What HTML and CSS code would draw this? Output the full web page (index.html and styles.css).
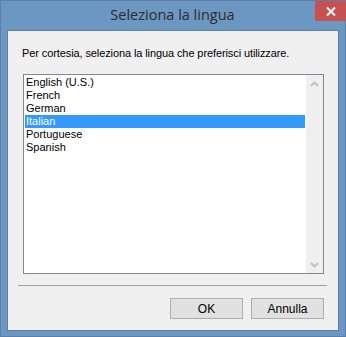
FILE: index.html
```html
<!DOCTYPE html>
<html>
<head>
   <meta charset="utf-8">
   <meta name="viewport" content="width=device-width, initial-scale=1">
   <title>Seleziona la lingua</title>
   <link rel="stylesheet" href="styles.css">
</head>
<body>
   <div class="window">
      <div class="titlebar">
         <div class="title">Seleziona la lingua</div>
         <div class="close">
            <svg width="10" height="9" viewBox="0 0 10 9">
               <path d="M1 0.5 L9 8.5 M9 0.5 L1 8.5" stroke="#fff" stroke-width="2"/>
            </svg>
         </div>
      </div>
      <div class="client">
         <p class="prompt">Per cortesia, seleziona la lingua che preferisci utilizzare.</p>
         <div class="listbox">
            <ul class="items">
               <li>English (U.S.)</li>
               <li>French</li>
               <li>German</li>
               <li class="selected">Italian</li>
               <li>Portuguese</li>
               <li>Spanish</li>
            </ul>
            <div class="scroll">
               <svg width="17" height="10" viewBox="0 0 17 10"><path d="M5 7 L8.5 3.5 L12 7" stroke="#c2c2c2" stroke-width="2" fill="none"/></svg>
               <svg width="17" height="10" viewBox="0 0 17 10"><path d="M5 3 L8.5 6.5 L12 3" stroke="#c2c2c2" stroke-width="2" fill="none"/></svg>
            </div>
         </div>
         <div class="line"></div>
         <div class="buttons">
            <button type="button" class="btn">OK</button>
            <button type="button" class="btn">Annulla</button>
         </div>
      </div>
   </div>
</body>
</html>
```
FILE: styles.css
```css
body{
   margin: 0;
   background: #6b97c2;
}

.window{
   width: 346px;
   height: 337px;
   box-sizing: border-box;
   border: 1px solid #5a80a8;
   background: #6b97c2;
   padding: 0 6px;
}

.titlebar{
   height: 29px;
   display: flex;
   justify-content: center;
   position: relative;
}

.title{
   font-family: "Open Sans", "Noto Sans", sans-serif;
   font-size: 14.5px;
   color: #2d2d2d;
   margin-top: 4px;
   margin-left: -1px;
}

.close{
   position: absolute;
   right: -7px;
   top: 0;
   width: 31px;
   height: 20px;
   background: #c75050;
   display: flex;
   align-items: center;
   justify-content: center;
}

.client{
   height: 299px;
   border: 1px solid #5a80a8;
   background: #f0f0f0;
   font-family: "Liberation Sans", Arial, sans-serif;
   font-size: 11px;
   color: #000;
}

.prompt{
   margin: 15px 0 0 14px;
   font-size: 11px;
   line-height: 14px;
   letter-spacing: -0.1px;
   color: #000;
}

.listbox{
   margin: 14px 0 0 15px;
   width: 299px;
   height: 198px;
   border: 1px solid #828790;
   background: #fff;
   display: flex;
}

.items{
   list-style: none;
   margin: 0;
   padding: 1px 1px 0 1px;
   flex: 1;
}

.items li{
   height: 13px;
   line-height: 13px;
   padding-left: 1px;
}

.items li.selected{
   background: #3399ff;
   color: #fff;
}

.scroll{
   width: 17px;
   background: #efefef;
   display: flex;
   flex-direction: column;
   justify-content: space-between;
   padding: 4px 0 3px;
}

.scroll svg{
   display: block;
}

.line{
   margin: 11px 0 0 10px;
   width: 309px;
   border-top: 1px solid #a0a0a0;
}

.buttons{
   display: flex;
   justify-content: flex-end;
   gap: 8px;
   margin: 12px 14px 0 0;
}

.btn{
   width: 73px;
   height: 21px;
   background: #e1e1e1;
   border: 1px solid #adadad;
   font-family: "Liberation Sans", Arial, sans-serif;
   font-size: 12px;
   color: #000;
   padding: 0;
}
```
